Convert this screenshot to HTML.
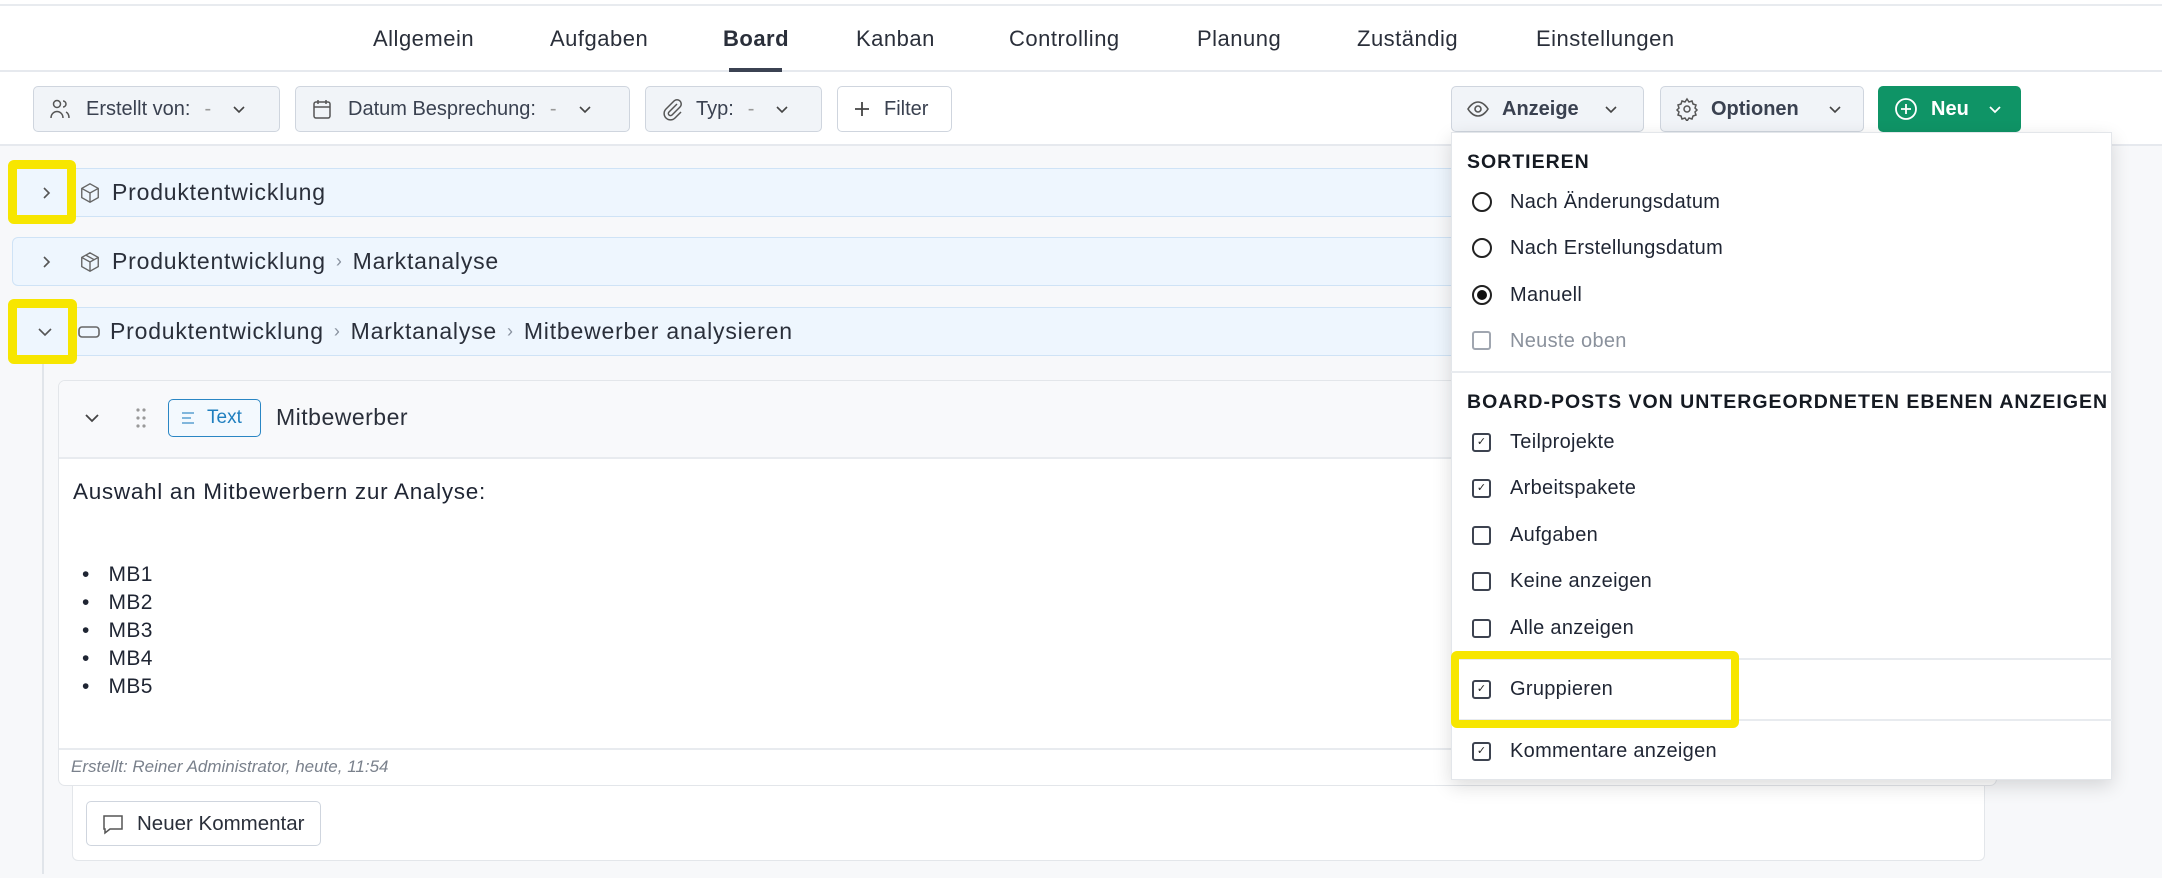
<!DOCTYPE html>
<html><head><meta charset="utf-8">
<style>
*{box-sizing:border-box;margin:0;padding:0}
body{width:2162px;height:878px;overflow:hidden;background:#f7f8fa;font-family:"Liberation Sans",Arial,sans-serif;color:#1f2533;position:relative}
.abs{position:absolute}
.top{left:0;top:0;width:2162px;height:146px;background:#fff;border-bottom:2px solid #e6e9ee}
.topline{left:0;top:4px;width:2162px;height:2px;background:#e8ebef}
.navline{left:0;top:70px;width:2162px;height:2px;background:#e6e9ee}
.tab{top:26px;font-size:22px;color:#2a2f3a;letter-spacing:.5px}
.btn{top:86px;height:46px;border:1.5px solid #cfd5de;border-radius:5px;background:#f1f4f8;font-size:20px;color:#3a4150;display:flex;align-items:center;padding-left:14px}
.btn svg{flex:none}
.row{height:49px;background:#eef6fe;border:1.5px solid #cfe3f6;border-radius:6px;font-size:23px;letter-spacing:.8px;display:flex;align-items:center;color:#2a2f3a}
.sep{color:#8a93a0;margin:0 10px;font-size:18px}
.yel{border:9px solid #f7e600;border-radius:6px}
.menu{left:1451px;top:132px;width:661px;height:648px;background:#fff;box-shadow:0 6px 18px rgba(0,0,0,.14);border:1px solid #e3e6ea}
.mi{left:1510px;font-size:20px;color:#1f2533;letter-spacing:.3px}
.mh{left:1467px;font-size:19.5px;font-weight:bold;letter-spacing:1px;color:#151a22}
.rad{left:1472px;width:20px;height:20px;border:2px solid #222;border-radius:50%}
.cb{left:1472px;width:19px;height:19px;border:2px solid #3d4350;border-radius:3px;font-size:11px;line-height:14px;text-align:center;color:#222}
.dv{left:1451px;width:661px;height:2px;background:#e8ebef}
</style></head><body>
<div class="abs top"></div>
<div class="abs topline"></div>
<div class="abs navline"></div>
<div class="abs tab" style="left:373px">Allgemein</div>
<div class="abs tab" style="left:550px">Aufgaben</div>
<div class="abs tab" style="left:723px;font-weight:bold">Board</div>
<div class="abs" style="left:729px;top:68px;width:53px;height:4px;background:#3b4252"></div>
<div class="abs tab" style="left:856px">Kanban</div>
<div class="abs tab" style="left:1009px">Controlling</div>
<div class="abs tab" style="left:1197px">Planung</div>
<div class="abs tab" style="left:1357px">Zuständig</div>
<div class="abs tab" style="left:1536px">Einstellungen</div>

<div class="abs btn" style="left:33px;width:247px"><svg width="24" height="24" viewBox="0 0 24 24" fill="none" stroke="#555" stroke-width="1.5"><circle cx="9" cy="7" r="3.5"/><path d="M3 21c0-4 3-6.5 6-6.5s6 2.5 6 6.5M15 4a3 3 0 010 6M18 15c2 1 3 3 3 6"/></svg><span style="margin-left:14px">Erstellt von:</span><span style="margin-left:14px;color:#999">-</span><svg style="margin-left:20px" width="16" height="16" viewBox="0 0 16 16" fill="none" stroke="#444" stroke-width="1.6"><path d="M3 6l5 5 5-5"/></svg></div>
<div class="abs btn" style="left:295px;width:335px"><svg width="24" height="24" viewBox="0 0 24 24" fill="none" stroke="#555" stroke-width="1.5"><rect x="4" y="5" width="16" height="16" rx="2"/><path d="M4 10h16M8 3v4M16 3v4"/></svg><span style="margin-left:14px">Datum Besprechung:</span><span style="margin-left:14px;color:#999">-</span><svg style="margin-left:20px" width="16" height="16" viewBox="0 0 16 16" fill="none" stroke="#444" stroke-width="1.6"><path d="M3 6l5 5 5-5"/></svg></div>
<div class="abs btn" style="left:645px;width:177px"><svg width="24" height="24" viewBox="0 0 24 24" fill="none" stroke="#555" stroke-width="1.5"><path d="M17 7l-8 8a2 2 0 003 3l8-8a4 4 0 00-6-6l-8 8a6 6 0 009 9l6-6"/></svg><span style="margin-left:12px">Typ:</span><span style="margin-left:14px;color:#999">-</span><svg style="margin-left:20px" width="16" height="16" viewBox="0 0 16 16" fill="none" stroke="#444" stroke-width="1.6"><path d="M3 6l5 5 5-5"/></svg></div>
<div class="abs btn" style="left:837px;width:115px;background:#fff"><svg width="20" height="20" viewBox="0 0 20 20" fill="none" stroke="#444" stroke-width="1.8"><path d="M10 3v14M3 10h14"/></svg><span style="margin-left:12px">Filter</span></div>

<div class="abs btn" style="left:1451px;width:193px;font-weight:bold"><svg width="24" height="24" viewBox="0 0 24 24" fill="none" stroke="#555" stroke-width="1.6"><path d="M2 12s4-7 10-7 10 7 10 7-4 7-10 7S2 12 2 12z"/><circle cx="12" cy="12" r="3"/></svg><span style="margin-left:12px">Anzeige</span><svg style="margin-left:24px" width="16" height="16" viewBox="0 0 16 16" fill="none" stroke="#444" stroke-width="1.6"><path d="M3 6l5 5 5-5"/></svg></div>
<div class="abs btn" style="left:1660px;width:204px;font-weight:bold"><svg width="24" height="24" viewBox="0 0 24 24" fill="none" stroke="#555" stroke-width="1.5"><circle cx="12" cy="12" r="3"/><path d="M12 2l2 3 3-1 1 3 3 1-1 3 2 2-2 2 1 3-3 1-1 3-3-1-2 3-2-3-3 1-1-3-3-1 1-3-2-2 2-2-1-3 3-1 1-3 3 1z"/></svg><span style="margin-left:12px">Optionen</span><svg style="margin-left:28px" width="16" height="16" viewBox="0 0 16 16" fill="none" stroke="#444" stroke-width="1.6"><path d="M3 6l5 5 5-5"/></svg></div>
<div class="abs btn" style="left:1878px;width:143px;background:#0f9466;border-color:#0f9466;color:#fff;font-weight:bold"><svg width="26" height="26" viewBox="0 0 26 26" fill="none" stroke="#fff" stroke-width="1.8"><circle cx="13" cy="13" r="10"/><path d="M13 8v10M8 13h10"/></svg><span style="margin-left:12px">Neu</span><svg style="margin-left:18px" width="16" height="16" viewBox="0 0 16 16" fill="none" stroke="#fff" stroke-width="1.8"><path d="M3 6l5 5 5-5"/></svg></div>

<!-- rows -->
<div class="abs row" style="left:12px;top:168px;width:2000px"><svg style="margin-left:26px" width="14" height="14" viewBox="0 0 14 14" fill="none" stroke="#555" stroke-width="1.6"><path d="M5 2l5 5-5 5"/></svg><svg style="margin-left:26px" width="22" height="22" viewBox="0 0 24 24" fill="none" stroke="#666" stroke-width="1.5"><path d="M12 2l9 5v10l-9 5-9-5V7z"/><path d="M3 7l9 5 9-5M12 12v10"/></svg><span style="margin-left:11px">Produktentwicklung</span></div>
<div class="abs row" style="left:12px;top:237px;width:2000px"><svg style="margin-left:26px" width="14" height="14" viewBox="0 0 14 14" fill="none" stroke="#555" stroke-width="1.6"><path d="M5 2l5 5-5 5"/></svg><svg style="margin-left:26px" width="22" height="22" viewBox="0 0 24 24" fill="none" stroke="#666" stroke-width="1.5"><path d="M12 2l9 5v10l-9 5-9-5V7z"/><path d="M3 7l9 5 9-5M12 12v10M7.5 4.5l9 5"/></svg><span style="margin-left:11px">Produktentwicklung</span><span class="sep">›</span>Marktanalyse</div>
<div class="abs row" style="left:12px;top:307px;width:2000px"><svg style="margin-left:24px" width="16" height="14" viewBox="0 0 16 14" fill="none" stroke="#555" stroke-width="1.6"><path d="M2 4l6 6 6-6"/></svg><svg style="margin-left:24px" width="24" height="16" viewBox="0 0 24 16" fill="none" stroke="#666" stroke-width="1.6"><rect x="2" y="3" width="20" height="10" rx="3"/></svg><span style="margin-left:9px">Produktentwicklung</span><span class="sep">›</span>Marktanalyse<span class="sep">›</span>Mitbewerber analysieren</div>

<div class="abs" style="left:42px;top:364px;width:2px;height:510px;background:#e1e5ea"></div>
<!-- comment panel -->
<div class="abs" style="left:72px;top:760px;width:1913px;height:101px;background:#fff;border:1.5px solid #e3e6ea;border-radius:6px"></div>
<div class="abs" style="left:86px;top:801px;width:235px;height:45px;border:1.5px solid #cfd5de;border-radius:5px;background:#fff;display:flex;align-items:center;padding-left:14px;font-size:20.5px;color:#2a2f3a"><svg width="24" height="24" viewBox="0 0 24 24" fill="none" stroke="#555" stroke-width="1.5"><path d="M3 4h18v13H9l-5 4v-4H3z"/></svg><span style="margin-left:12px">Neuer Kommentar</span></div>
<!-- card -->
<div class="abs" style="left:58px;top:380px;width:1939px;height:406px;background:#fff;border:1.5px solid #e3e6ea;border-radius:7px;overflow:hidden">
 <div style="height:78px;background:#f8f9fb;border-bottom:2px solid #e8ebef"></div>
 <div style="position:absolute;left:0;top:367px;width:100%;height:2px;background:#e8ebef"></div>
</div>
<svg class="abs" style="left:84px;top:411px" width="16" height="14" viewBox="0 0 16 14" fill="none" stroke="#444" stroke-width="1.8"><path d="M2 4l6 6 6-6"/></svg>
<svg class="abs" style="left:135px;top:407px" width="12" height="22" viewBox="0 0 12 22" fill="#999"><circle cx="3" cy="3" r="1.6"/><circle cx="9" cy="3" r="1.6"/><circle cx="3" cy="11" r="1.6"/><circle cx="9" cy="11" r="1.6"/><circle cx="3" cy="19" r="1.6"/><circle cx="9" cy="19" r="1.6"/></svg>
<div class="abs" style="left:168px;top:399px;width:93px;height:38px;border:1.8px solid #2a86c4;border-radius:5px;background:#f3f9fe;color:#1f7fbf;font-size:19px;display:flex;align-items:center;padding-left:12px"><svg width="16" height="16" viewBox="0 0 16 16" fill="none" stroke="#5aa0d0" stroke-width="1.5"><path d="M1 3h12M1 8h9M1 13h12"/></svg><span style="margin-left:10px">Text</span></div>
<div class="abs" style="left:276px;top:404px;font-size:23px;letter-spacing:.5px;color:#2a2f3a">Mitbewerber</div>
<div class="abs" style="left:73px;top:479px;font-size:22.5px;letter-spacing:.7px;color:#1f2533">Auswahl an Mitbewerbern zur Analyse:</div>
<div class="abs" style="left:82px;top:561px;font-size:21px;line-height:28px;color:#1f2533;letter-spacing:.4px">
<div>•&nbsp;&nbsp;&nbsp;MB1</div><div>•&nbsp;&nbsp;&nbsp;MB2</div><div>•&nbsp;&nbsp;&nbsp;MB3</div><div>•&nbsp;&nbsp;&nbsp;MB4</div><div>•&nbsp;&nbsp;&nbsp;MB5</div></div>
<div class="abs" style="left:71px;top:757px;font-size:17px;font-style:italic;color:#7a818c">Erstellt: Reiner Administrator, heute, 11:54</div>

<!-- dropdown -->
<div class="abs menu"></div>
<div class="abs mh" style="top:151px">SORTIEREN</div>
<div class="abs rad" style="top:192px"></div><div class="abs mi" style="top:191px">Nach Änderungsdatum</div>
<div class="abs rad" style="top:238px"></div><div class="abs mi" style="top:237px">Nach Erstellungsdatum</div>
<div class="abs rad" style="top:285px;border-width:2px"><div style="margin:3px;width:10px;height:10px;border-radius:50%;background:#111"></div></div><div class="abs mi" style="top:284px">Manuell</div>
<div class="abs cb" style="top:331px;border-color:#a0a6b0"></div><div class="abs mi" style="top:330px;color:#8a919c">Neuste oben</div>
<div class="abs dv" style="top:371px"></div>
<div class="abs mh" style="top:391px">BOARD-POSTS VON UNTERGEORDNETEN EBENEN ANZEIGEN</div>
<div class="abs cb" style="top:433px">✓</div><div class="abs mi" style="top:431px">Teilprojekte</div>
<div class="abs cb" style="top:479px">✓</div><div class="abs mi" style="top:477px">Arbeitspakete</div>
<div class="abs cb" style="top:526px"></div><div class="abs mi" style="top:524px">Aufgaben</div>
<div class="abs cb" style="top:572px"></div><div class="abs mi" style="top:570px">Keine anzeigen</div>
<div class="abs cb" style="top:619px"></div><div class="abs mi" style="top:617px">Alle anzeigen</div>
<div class="abs dv" style="top:658px"></div>
<div class="abs cb" style="top:680px">✓</div><div class="abs mi" style="top:678px">Gruppieren</div>
<div class="abs dv" style="top:719px"></div>
<div class="abs cb" style="top:742px">✓</div><div class="abs mi" style="top:740px">Kommentare anzeigen</div>

<!-- highlights -->
<div class="abs yel" style="left:8px;top:160px;width:68px;height:64px"></div>
<div class="abs yel" style="left:8px;top:299px;width:69px;height:65px"></div>
<div class="abs yel" style="left:1451px;top:651px;width:288px;height:77px;border-width:8px"></div>
</body></html>
